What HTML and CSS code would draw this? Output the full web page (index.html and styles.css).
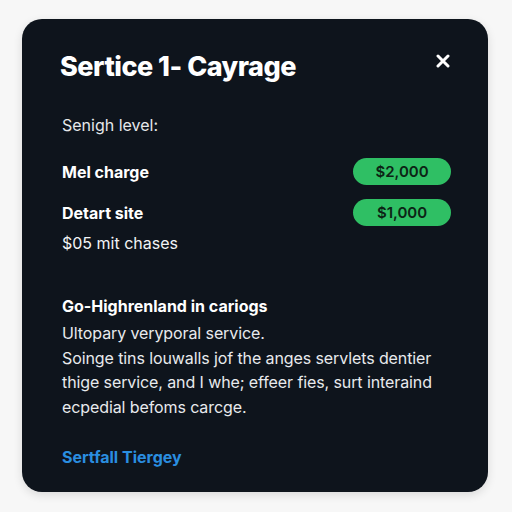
FILE: index.html
```html
<!DOCTYPE html>
<html>
<head>
<meta charset="utf-8">
<link rel="stylesheet" href="styles.css">
</head>
<body>
<div class="card">
  <div class="head">
    <h1 class="title">Sertice 1- Cayrage</h1>
    <svg class="close" width="14" height="14" viewBox="0 0 14 14"><path d="M2 2 L12 12 M12 2 L2 12" stroke="#ffffff" stroke-width="3" stroke-linecap="round"/></svg>
  </div>
  <p class="level">Senigh level:</p>
  <div class="row row-first">
    <span class="label">Mel charge</span>
    <span class="pill">$2,000</span>
  </div>
  <div class="row">
    <span class="label">Detart site</span>
    <span class="pill">$1,000</span>
  </div>
  <p class="note">$05 mit chases</p>
  <h2 class="sub">Go-Highrenland in cariogs</h2>
  <p class="body">Ultopary veryporal service.<br>Soinge tins louwalls jof the anges servlets dentier<br>thige service, and I whe; effeer fies, surt interaind<br>ecpedial befoms carcge.</p>
  <a class="link">Sertfall Tiergey</a>
</div>
</body>
</html>
```
FILE: styles.css
```css
html, body { margin: 0; padding: 0; }
body {
  background: #f7f7f7;
  width: 512px;
  height: 512px;
  padding: 19px 24px 20px 22px;
  box-sizing: border-box;
  font-family: Inter, "Noto Sans", sans-serif;
}
.card {
  background: #0e141c;
  border-radius: 20px;
  height: 473px;
  box-sizing: border-box;
  padding: 31px 37px 0 38px;
  color: #f2f4f6;
  box-shadow: 0 3px 10px rgba(0,0,0,0.12);
}
.head {
  display: flex;
  justify-content: space-between;
  align-items: flex-start;
}
.title {
  margin: 0;
  font-size: 27px;
  line-height: 34px;
  font-weight: 800;
  letter-spacing: -0.5px;
  color: #ffffff;
}
.close {
  margin-top: 4px;
  margin-right: 1px;
}
.level {
  margin: 31px 0 0 2px;
  font-size: 16px;
  line-height: 20px;
  color: #e6e8eb;
}
.row {
  display: flex;
  justify-content: space-between;
  align-items: center;
  margin-top: 14px;
  padding-left: 2px;
}
.row-first { margin-top: 23px; }
.label {
  font-size: 16px;
  font-weight: 700;
  color: #ffffff;
}
.pill {
  width: 98px;
  height: 27px;
  border-radius: 14px;
  background: #2fbf64;
  color: #0c2415;
  font-size: 15px;
  font-weight: 600;
  display: flex;
  align-items: center;
  justify-content: center;
}
.note {
  margin: 7px 0 0 2px;
  font-size: 16px;
  line-height: 20px;
  color: #f2f4f6;
}
.sub {
  margin: 43px 0 0 2px;
  font-size: 16px;
  line-height: 20px;
  font-weight: 700;
  color: #ffffff;
}
.body {
  margin: 5px 0 0 2px;
  font-size: 16px;
  line-height: 24.7px;
  letter-spacing: -0.1px;
  color: #e8eaed;
  white-space: nowrap;
}
.link {
  display: block;
  margin: 27px 0 0 2px;
  font-size: 16px;
  font-weight: 700;
  color: #2a8ee0;
}
```
